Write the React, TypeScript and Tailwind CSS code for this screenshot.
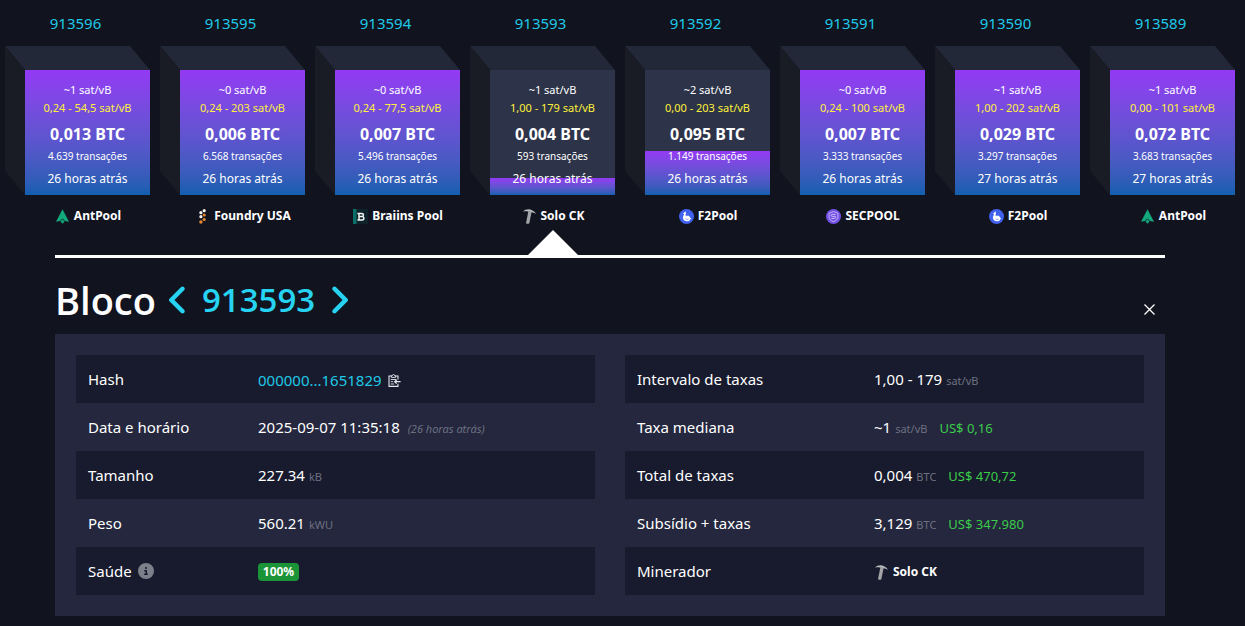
import type { ReactNode } from "react";
import { FaAngleLeft, FaAngleRight, FaCircleInfo } from "react-icons/fa6";

type Pool = "AntPool" | "Foundry USA" | "Braiins Pool" | "Solo CK" | "F2Pool" | "SECPOOL";

type Block = {
  height: number;
  median: string;
  range: string;
  fees: string;
  txs: string;
  ago: string;
  pool: Pool;
  fill: number;
};

const SELECTED = 913593;

const blocks: Block[] = [
  { height: 913596, median: "~1", range: "0,24 - 54,5", fees: "0,013", txs: "4.639", ago: "26 horas atrás", pool: "AntPool", fill: 100 },
  { height: 913595, median: "~0", range: "0,24 - 203", fees: "0,006", txs: "6.568", ago: "26 horas atrás", pool: "Foundry USA", fill: 100 },
  { height: 913594, median: "~0", range: "0,24 - 77,5", fees: "0,007", txs: "5.496", ago: "26 horas atrás", pool: "Braiins Pool", fill: 100 },
  { height: 913593, median: "~1", range: "1,00 - 179", fees: "0,004", txs: "593", ago: "26 horas atrás", pool: "Solo CK", fill: 14 },
  { height: 913592, median: "~2", range: "0,00 - 203", fees: "0,095", txs: "1.149", ago: "26 horas atrás", pool: "F2Pool", fill: 35 },
  { height: 913591, median: "~0", range: "0,24 - 100", fees: "0,007", txs: "3.333", ago: "26 horas atrás", pool: "SECPOOL", fill: 100 },
  { height: 913590, median: "~1", range: "1,00 - 202", fees: "0,029", txs: "3.297", ago: "27 horas atrás", pool: "F2Pool", fill: 100 },
  { height: 913589, median: "~1", range: "0,00 - 101", fees: "0,072", txs: "3.683", ago: "27 horas atrás", pool: "AntPool", fill: 100 },
];

function PoolIcon({ pool }: { pool: Pool }) {
  switch (pool) {
    case "AntPool":
      return (
        <svg viewBox="0 0 15 15" className="size-[15px]" fill="#12a87b">
          <path d="M7.5.3 14 12.8l-4-.8-2.500-2.600L5 12l-4 .8z" />
          <path d="M7.500 10.300 9.500 12.600 7.500 14.800 5.500 12.600z" />
        </svg>
      );
    case "Foundry USA":
      return (
        <svg viewBox="0 0 15 15" className="size-[15px]">
          <g fill="#f4f1ea">
            <circle cx="9.2" cy="1.7" r="1.6" />
            <circle cx="5.9" cy="3.7" r="1.6" />
            <circle cx="5.9" cy="7.7" r="1.6" />
          </g>
          <g fill="#e8862e">
            <circle cx="9.2" cy="6" r="1.6" />
            <circle cx="9.2" cy="10.5" r="1.6" />
            <circle cx="5.9" cy="13" r="1.7" />
          </g>
        </svg>
      );
    case "Braiins Pool":
      return (
        <svg viewBox="0 0 15 15" className="size-[15px]">
          <path d="M0 0h15v15H0z" fill="#0e2229" />
          <path d="M0 0h3.500v15H0z" fill="#0b6e69" />
          <path
            d="M4.400 4.400h4.400a1.600 1.600 0 0 1 0 3.200H6.200h2.900a1.700 1.700 0 0 1 0 3.500H4.400M6 4.400v6.700"
            fill="none"
            stroke="#f3f7f7"
            strokeWidth="1.5"
          />
        </svg>
      );
    case "Solo CK":
      return (
        <svg viewBox="0 0 15 15" className="size-[15px]">
          <path d="M.9 2.600C3.600.1 7.200-.5 10 1.200c2 .8 3.100 1.900 4 3.800-1.600-1.300-2.800-1.700-4.400-1.800L5.800 2.500C4 2.200 2.600 2.300.9 2.600z" fill="#b9babd" />
          <path d="m6.400 2 3.300.5L7.300 14.200q-1.500 1-3.300 0z" fill="#a3a4a8" />
        </svg>
      );
    case "F2Pool":
      return (
        <svg viewBox="0 0 15 15" className="size-[15px]">
          <circle cx="7.5" cy="7.5" r="7.5" fill="#3f61ee" />
          <path d="M6.300 2.300 7.100 4.200C6.300 5.100 6.400 6.300 7.100 7.300l1-1.100.8 1 1-.8.6 1.300 2 2.500-1.200-.2c-.2 1.600-1.400 2.300-3.200 2.300-2.300 0-4-1.300-4.200-3.300-.1-1.500.9-2.500 1.200-4.100L3.700 4.900l1.400-1.100z" fill="#fff" />
          <path d="M6.500 9.700c1 .9 2 1 3.100.2" fill="none" stroke="#3f61ee" strokeWidth=".6" />
        </svg>
      );
    case "SECPOOL":
      return (
        <svg viewBox="0 0 15 15" className="size-[15px]">
          <circle cx="7.5" cy="7.5" r="7.5" fill="#7350e4" />
          <path
            d="M7.500 2.500 11.900 4.200v4.200c0 1.800-1.600 3.200-4.400 4.300-2.800-1.100-4.400-2.500-4.400-4.300V4.200z"
            fill="none"
            stroke="#d3c8fa"
            strokeWidth=".8"
          />
          <path d="M9.600 5.400H6.200q-1 .1-1 1t1 1h2.600q1 .1 1 1t-1 1H5.400" fill="none" stroke="#d3c8fa" strokeWidth=".9" />
        </svg>
      );
  }
}

function PoolBadge({ pool }: { pool: Pool }) {
  return (
    <a href="#" className="flex items-center gap-1 text-xs leading-4 font-bold text-white">
      <PoolIcon pool={pool} />
      <span>{pool}</span>
    </a>
  );
}

function BlockItem({ block }: { block: Block }) {
  return (
    <li className="w-[145px] shrink-0">
      <a href="#" className="block pr-1 text-center text-[15px] leading-6 text-[#1fc9e7]">
        {block.height}
      </a>
      <div className="relative mt-[11px] pt-6 pl-5">
        <svg viewBox="0 0 145 149" className="absolute inset-0 h-[149px] w-[145px]" aria-hidden="true">
          <path d="M0 0h125l20 24H20z" fill="#232838" />
          <path d="M0 0l20 24v125L0 125z" fill="#191b25" />
        </svg>
        <div className="relative h-[125px] bg-[#2d3348] text-center text-white">
          <div
            className="absolute inset-x-0 bottom-0 bg-linear-to-b from-[#9339f4] to-[#105fb0]"
            style={{ height: `${block.fill}%` }}
          />
          <div className="relative flex flex-col pt-[11px] whitespace-nowrap">
            <span className="text-[11px] leading-[18px]">{block.median} sat/vB</span>
            <span className="text-[11px] leading-[18px] text-[#fff13a]">{block.range} sat/vB</span>
            <span className="pt-1 text-base leading-[26px] font-bold">{block.fees} BTC</span>
            <span className="text-[10px] leading-[18px]">{block.txs} transações</span>
            <span className="text-xs leading-7">{block.ago}</span>
          </div>
        </div>
      </div>
      <div className="flex h-[35px] items-start justify-center pt-[13px] pl-[21px]">
        <PoolBadge pool={block.pool} />
      </div>
      {block.height === SELECTED && (
        <svg viewBox="0 0 50 25" className="ml-[58px] h-[25px] w-[50px]" fill="#fff" aria-hidden="true">
          <path d="M25 0l25 25H0z" />
        </svg>
      )}
    </li>
  );
}

function ClipboardIcon() {
  return (
    <svg viewBox="0 0 13 13" className="h-[13px] w-[13px]" fill="none" stroke="#e6e8ee">
      <path d="M3.500 2H1v10.400h9V9.800M7.500 2H10v3.400" strokeWidth="1.1" />
      <path d="M3.300 3.400V1.700h1.100q.1-1.200 1.100-1.200t1.100 1.200h1.100v1.700z" strokeWidth=".9" />
      <path d="M2.700 5.500h5.500M2.700 7.700h2.500M2.700 10h3.500" strokeWidth=".9" />
      <path d="M12.600 7.700H7M8.700 5.800 6.700 7.700l2 1.900" strokeWidth="1.2" />
    </svg>
  );
}

function Unit({ children }: { children: ReactNode }) {
  return <span className="ml-1 text-[11px] text-[#6d7080]">{children}</span>;
}

function Fiat({ children }: { children: ReactNode }) {
  return <span className="ml-3 text-[13px] text-[#3bcc49]">{children}</span>;
}

function Row({ label, children }: { label: ReactNode; children: ReactNode }) {
  return (
    <tr className="h-12 odd:bg-[#181b2d]">
      <th scope="row" className="px-3 text-left font-normal">
        {label}
      </th>
      <td className="px-3 pt-0.5">{children}</td>
    </tr>
  );
}

export default function App() {
  return (
    <div className="min-h-screen overflow-hidden bg-[#11131f] font-['Noto_Sans','Open_Sans',sans-serif] text-[15px] leading-6 text-white">
      <ul className="flex gap-2.5 pt-[11px] pl-[5px]">
        {blocks.map((block) => (
          <BlockItem key={block.height} block={block} />
        ))}
      </ul>

      <main className="pr-20 pb-2.5 pl-[55px]">
        <div className="h-[3px] bg-white" />
        <div className="flex h-[76px] items-center justify-between">
          <h1 className="flex items-center pt-2 font-['Open_Sans','Noto_Sans',sans-serif] text-[38px] leading-[48px] font-semibold">
            Bloco
            <a href="#" aria-label="Bloco anterior" className="ml-1 text-[#27d3f2]">
              <FaAngleLeft className="size-9" />
            </a>
            <a href="#" className="mx-1.5 text-[33px] text-[#27d3f2]">
              {SELECTED}
            </a>
            <a href="#" aria-label="Próximo bloco" className="text-[#27d3f2]">
              <FaAngleRight className="size-9" />
            </a>
          </h1>
          <button type="button" aria-label="Fechar" className="mt-[26px] mr-2.5 cursor-pointer">
            <svg viewBox="0 0 11 11" className="size-[11px]" fill="none" stroke="#fff" strokeWidth="1.3">
              <path d="M.5.5l10 10M10.500.5l-10 10" />
            </svg>
          </button>
        </div>

        <section className="grid grid-cols-2 gap-[30px] bg-[#24273e] p-[21px]">
          <table className="w-full table-fixed">
            <colgroup>
              <col className="w-[170px]" />
              <col />
            </colgroup>
            <tbody>
              <Row label="Hash">
                <span className="flex items-center gap-1.5">
                  <a href="#" className="text-[#1fc9e7]">
                    000000...1651829
                  </a>
                  <button type="button" aria-label="Copiar hash" className="cursor-pointer">
                    <ClipboardIcon />
                  </button>
                </span>
              </Row>
              <Row label="Data e horário">
                2025-09-07 11:35:18 <span className="ml-1 text-[11px] text-[#6d7080] italic">(26 horas atrás)</span>
              </Row>
              <Row label="Tamanho">
                227.34<Unit>kB</Unit>
              </Row>
              <Row label="Peso">
                560.21<Unit>kWU</Unit>
              </Row>
              <Row
                label={
                  <span className="flex items-center gap-1.5">
                    Saúde <FaCircleInfo className="size-4 text-[#7d7f8b]" />
                  </span>
                }
              >
                <span className="block w-[41px] rounded bg-[#1b9437] text-center text-xs leading-[18px] font-bold">100%</span>
              </Row>
            </tbody>
          </table>

          <table className="w-full table-fixed">
            <colgroup>
              <col className="w-[237px]" />
              <col />
            </colgroup>
            <tbody>
              <Row label="Intervalo de taxas">
                1,00 - 179<Unit>sat/vB</Unit>
              </Row>
              <Row label="Taxa mediana">
                ~1<Unit>sat/vB</Unit>
                <Fiat>US$ 0,16</Fiat>
              </Row>
              <Row label="Total de taxas">
                0,004<Unit>BTC</Unit>
                <Fiat>US$ 470,72</Fiat>
              </Row>
              <Row label="Subsídio + taxas">
                3,129<Unit>BTC</Unit>
                <Fiat>US$ 347.980</Fiat>
              </Row>
              <Row label="Minerador">
                <PoolBadge pool="Solo CK" />
              </Row>
            </tbody>
          </table>
        </section>
      </main>
    </div>
  );
}
